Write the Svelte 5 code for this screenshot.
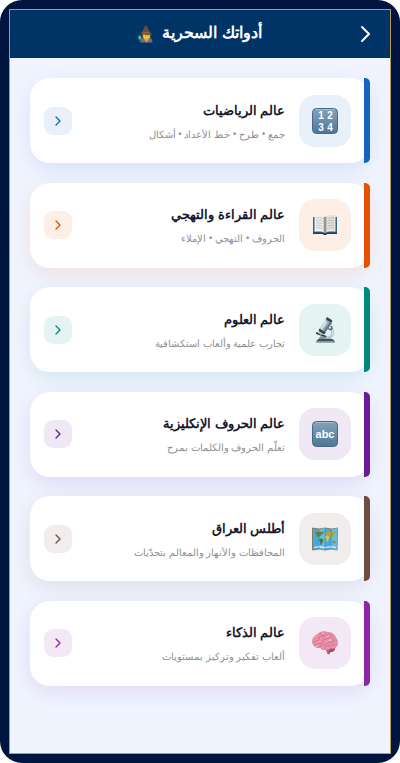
<script lang="ts">
  type World = {
    icon: 'numbers' | 'book' | 'microscope' | 'letters' | 'map' | 'brain';
    title: string;
    text: string;
    color: string;
    tint: string;
  };

  const worlds: World[] = [
    { icon: 'numbers', title: 'عالم الرياضيات', text: 'جمع • طرح • خط الأعداد • أشكال', color: '#1565c0', tint: '#e8f0f9' },
    { icon: 'book', title: 'عالم القراءة والتهجي', text: 'الحروف • التهجي • الإملاء', color: '#e65100', tint: '#fdeee6' },
    { icon: 'microscope', title: 'عالم العلوم', text: 'تجارب علمية وألعاب استكشافية', color: '#00897b', tint: '#e5f3f2' },
    { icon: 'letters', title: 'عالم الحروف الإنكليزية', text: 'تعلّم الحروف والكلمات بمرح', color: '#6a1b9a', tint: '#f0e8f5' },
    { icon: 'map', title: 'أطلس العراق', text: 'المحافظات والأنهار والمعالم بتحدّيات', color: '#6d4c41', tint: '#f0edec' },
    { icon: 'brain', title: 'عالم الذكاء', text: 'ألعاب تفكير وتركيز بمستويات', color: '#8e24aa', tint: '#f3e9f6' }
  ];
</script>

<svelte:head>
  <title>أدواتك السحرية</title>
</svelte:head>

<div class="device" dir="rtl">
  <div class="screen">
    <header>
      <button class="back" aria-label="رجوع">
        <svg width="12" height="18" viewBox="0 0 12 18"><path d="M2 2l7 7-7 7" /></svg>
      </button>
      <h1>
        أدواتك السحرية
        <svg class="mage" width="16" height="18" viewBox="0 0 16 18" aria-hidden="true">
          <path d="M2 17.500c0-4 3-6 6.500-6s6 2 6 6z" fill="#68707a" />
          <path d="M4 8c0 4 1 7 4.500 7S13 12 13 8z" fill="#8a5528" />
          <circle cx="8.500" cy="11" r="3.400" fill="#fbc63f" />
          <path d="M6 14l2.500 3.500 2.500-3.500-2.500-1z" fill="#e0a43a" />
          <path d="M2 8.500C4 7.500 5 6 6 3c.5-2 2-3 3.500-2L9 2.500c2 1 2 4 3 5l3 1.500c-4 1.300-9 1.200-13-.5z" fill="#62503a" />
          <path d="M5 6.500c2 1 5 1 7 .3v1c-2 1-5 1-7.500 0z" fill="#936d2b" />
          <path d="M2 11v6" stroke="#6b5637" />
          <ellipse cx="1.800" cy="12.500" rx="1.600" ry="2.300" fill="#30c48b" />
          <path d="M7 10.800h.8M9.600 10.800h.8" stroke="#503519" stroke-width=".8" />
        </svg>
      </h1>
    </header>

    <main>
      {#each worlds as world}
        <button class="card" style="--color: {world.color}; --tint: {world.tint};">
          <span class="tile">
            <svg width="28" height="28" viewBox="0 0 28 28" aria-hidden="true">
              {#if world.icon === 'numbers' || world.icon === 'letters'}
                <defs>
                  <linearGradient id="key-{world.icon}" x1="0" y1="0" x2="0" y2="1">
                    <stop offset="0" stop-color="#83a4bb" />
                    <stop offset="1" stop-color="#4b7798" />
                  </linearGradient>
                </defs>
                <rect x="1.500" y="1.500" width="25" height="25" rx="4" fill="url(#key-{world.icon})" stroke="#49687f" />
                <path d="M4.500 2.500h19" stroke="#b1c8d7" stroke-width=".7" />
                {#if world.icon === 'numbers'}
                  <g class="glyphs" font-size="10">
                    <text x="10" y="12">1</text>
                    <text x="19" y="12">2</text>
                    <text x="10" y="24">3</text>
                    <text x="19" y="24">4</text>
                  </g>
                {:else}
                  <text class="glyphs" x="14" y="18" font-size="11">abc</text>
                {/if}
              {:else if world.icon === 'book'}
                <path d="M2 6h24v17H16l-1 1h-2l-1-1H2z" fill="#276b96" />
                <path d="M2 21.500h10l2 1 2-1h10V23H16l-1 1h-2l-1-1H2z" fill="#17435f" />
                <path d="M3.500 4.500c4-.8 8-.5 10.500 1.500v16c-3-1.800-6.500-1.800-10.500-1.300z" fill="#f4f2ec" />
                <path d="M24.500 4.500c-4-.8-8-.5-10.500 1.500v16c3-1.800 6.500-1.800 10.500-1.300z" fill="#e4e3df" />
                <path d="M12.500 5.500L14 6l1.500-.5v15.700L14 22l-1.500-.8z" fill="#a9a9a7" />
                <path d="M14 6v16" stroke="#686c70" stroke-width=".6" />
                <path d="M5 7c2.500-.4 4.500-.2 6.500.5M5 9.500c2.500-.4 4.500-.2 6.500.5M5 12c2.500-.4 4.500-.2 6.500.5M5 14.500c2.500-.4 4.500-.2 6.500.5M5 17c2.500-.4 4.500-.2 6.500.5M23 7c-2.500-.4-4.500-.2-6.500.5M23 9.500c-2.500-.4-4.500-.2-6.500.5M23 12c-2.500-.4-4.500-.2-6.500.5M23 14.500c-2.500-.4-4.500-.2-6.500.5M23 17c-2.500-.4-4.500-.2-6.500.5" fill="none" stroke="#aaa8a2" stroke-width=".7" />
              {:else if world.icon === 'microscope'}
                <path d="M5 25.500c1-2 3-3 6-3h7c3 0 5 1 6 3z" fill="#41515a" />
                <path d="M5 25.500h19v1.200H5z" fill="#78909b" />
                <path d="M17 10c5 1 7 5 6 8-.7 2.500-3 4.500-5 4.500h-4l1-2c4 0 5-2 5-4 0-2-2-3.500-5-3.500z" fill="#b7c5cb" />
                <path d="M20 12c2 2 2.500 5 .7 7.200" fill="none" stroke="#edf2f3" />
                <path d="M5.500 16l10 4-.7 1.800-10-4z" fill="#2e3940" />
                <path d="M10 20l-3 3h7l1-2z" fill="#81939d" />
                <path d="M15.500 3.500l5.500 3.500-7.500 10.500-5.500-3.500z" fill="#93a9b5" />
                <path d="M14.500 5l2 1.200-7 10-1.500-1z" fill="#d8e3e8" />
                <path d="M19 6l2 1-7.500 10.500-1.800-1z" fill="#647b89" />
                <path d="M16 1l5.500 3.500-1.300 2.200-5.500-3.500zM8.500 12.500l6 4-1.500 2-5.500-3.500z" fill="#35434b" />
                <path d="M8.500 15.500l3 2-1 2-3-2z" fill="#a9bbc3" />
                <circle cx="19.500" cy="12" r="2.300" fill="#53656f" />
                <circle cx="19" cy="11.500" r="1.200" fill="#d3dee3" />
              {:else if world.icon === 'map'}
                <path d="M1.500 3l6.500 1 6-1 6.500 1 6-1-.5 22-6-1-6 1-6-1-6.500 1z" fill="#48a8dd" stroke="#807657" stroke-width=".9" />
                <path d="M8 4l6-1v22l-6-1zM20.500 4l6-1-.5 22-6-1z" fill="#76c6ea" opacity=".65" />
                <path d="M4 7.500l3-1 3 .5 2-.4.8 1.400-1.800 1-1.300 1.700-1.700.5 1 1.200-1.400-.2-2-2z" fill="#727e2c" />
                <path d="M9 13.500l2.500.5 1 1.500-1.200 2-.8 3-1-1-.5-3-1-1.500z" fill="#517535" />
                <path d="M14.500 8l2.500-1.500 3 .5 4.500-.3v2l-2 1-.5 2.300-1.700-1-1 1-1-1.700-3.300-.3z" fill="#b0a634" />
                <path d="M14.500 10.800l2.500-.4 1.500 1.600-.8 1.700-.8 3-1.300-.8-.3-2.400-1.300-.7z" fill="#ddc83d" />
                <path d="M21.500 16.500l1.700-.8 1.500 1.200-.5 1.500-2.200-.2z" fill="#a08235" />
                <path d="M3 22.500l5-.8 6 .8 6-.8 5 .8" fill="none" stroke="#e8f0eb" stroke-width="1.200" />
                <path d="M8 4v20M14 3v22M20.500 4L20 24" stroke="#336f91" stroke-width=".4" />
              {:else}
                <path d="M15 21l1.500 4 2 .5 1.200-4z" fill="#b85974" />
                <path d="M17 19.500c3-1 6-1.500 7 0 .5 2.500-3 4.200-6 3.500z" fill="#a94766" />
                <path d="M2 15C.5 11 3 7 6.500 5.500 9 2.500 14 2 17 3.500c4 0 7 2.500 7.800 5.500 2.500 3 2.200 7-.3 9.500-1.500 1.500-3.800 1.500-5 1-1 2-4 2-5.500.7-2 .8-4-.2-4.500-1.700C6 19 3.500 18 2 15z" fill="#ec91a9" stroke="#c4688a" stroke-width=".6" />
                <path d="M4 10c2-1 2-3 4-3.300M9 4.500c2 0 2 2 4 1.300M13 3.500c0 2 3 1.500 3.500 3.500M18.500 4.500c-1 2 2 2.500 3.500 2M3 13c2-2 4 0 5-2s-1-2.500 1-3.500 3 1 5-.5M10 12c2 .5 2-2.500 4.500-2s2.500-2 5-1.500M21 8c-1 2 1 3 3 3M4 16c2 0 2-2 4.500-1.500s3-1 5-1.500M8 17.500c2 0 3-2 5-1.500s3-2.500 6-2.500 3-2 5-1.500M13.500 19c0-2 3-2 4.500-2s3-2 6-1" fill="none" stroke="#c9648a" stroke-width=".7" />
                <path d="M4.500 8.500l2-1.500M11 4.500l2-.3M15.500 8l2-.5M7 13l2-.7M18 11.500l2-.7M5 17l1.500.2" stroke="#ffc0ca" stroke-width=".9" stroke-linecap="round" />
              {/if}
            </svg>
          </span>
          <span class="copy">
            <strong>{world.title}</strong>
            <small>{world.text}</small>
          </span>
          <span class="go">
            <svg width="6" height="10" viewBox="0 0 6 10" aria-hidden="true"><path d="M1 1l4 4-4 4" /></svg>
          </span>
        </button>
      {/each}
    </main>
  </div>
</div>

<style>
  :global(body) {
    background: #fff;
  }
  .device {
    box-sizing: border-box;
    display: flex;
    min-height: 100vh;
    padding: 9px;
    border-radius: 22px;
    background: #001440;
    font-family: "Noto Sans", sans-serif;
  }
  .screen {
    flex: 1;
    display: flex;
    flex-direction: column;
    min-width: 0;
    border: 1px solid #b39c55;
    background: #f0f4ff;
  }
  header {
    display: grid;
    grid-template-columns: 1fr auto 1fr;
    align-items: center;
    height: 48px;
    padding: 0 16px;
    background: #003366;
  }
  button {
    border: 0;
    font-family: inherit;
    cursor: pointer;
  }
  .back {
    justify-self: start;
    display: flex;
    padding: 2px;
    background: none;
  }
  .back path,
  .go path {
    fill: none;
    stroke: #fff;
    stroke-width: 2;
    stroke-linecap: round;
    stroke-linejoin: round;
  }
  h1 {
    display: flex;
    align-items: center;
    gap: 8px;
    margin: 0;
    padding-bottom: 4px;
    color: #fff;
    font-size: 16px;
    line-height: 24px;
  }
  .mage {
    margin-top: 4px;
  }
  main {
    flex: 1;
    display: flex;
    flex-direction: column;
    justify-content: space-between;
    gap: 16px;
    padding: 20px 20px 67px;
  }
  .card {
    position: relative;
    display: flex;
    align-items: center;
    gap: 14px;
    width: 100%;
    min-height: 85px;
    padding: 16px 19px 16px 14px;
    border-radius: 20px;
    background: #fff;
    box-shadow: 0 6px 20px color-mix(in srgb, var(--color) 12%, transparent);
    text-align: start;
  }
  .card::before {
    content: "";
    position: absolute;
    inset: 0 0 0 auto;
    width: 6px;
    border-radius: 0 5px 5px 0;
    background: var(--color);
  }
  .tile,
  .go {
    flex: none;
    display: grid;
    place-items: center;
    background: var(--tint);
  }
  .tile {
    width: 52px;
    height: 52px;
    border-radius: 16px;
  }
  .go {
    width: 28px;
    height: 28px;
    border-radius: 9px;
  }
  .go path {
    stroke: var(--color);
    stroke-width: 1.3;
  }
  .copy {
    flex: 1;
    min-width: 0;
    display: flex;
    flex-direction: column;
    gap: 4px;
  }
  strong {
    color: #1a1a2e;
    font-size: 13px;
    line-height: 22px;
  }
  small {
    color: #8f8f8f;
    font-size: 10px;
    line-height: 18px;
  }
  .glyphs {
    fill: #fff;
    font-family: "Liberation Sans", sans-serif;
    font-weight: bold;
    text-anchor: middle;
    direction: ltr;
  }
</style>
